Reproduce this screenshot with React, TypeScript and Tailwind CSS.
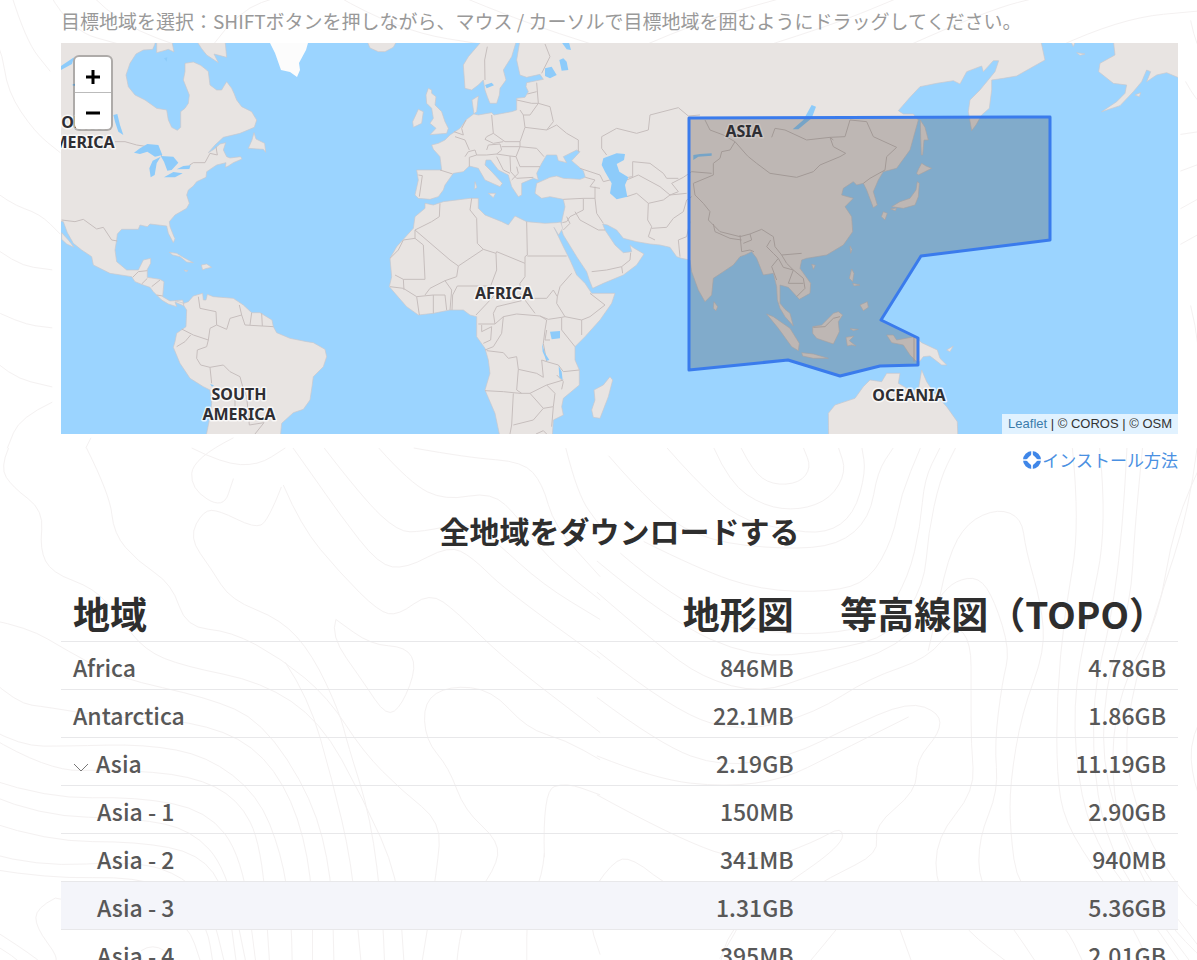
import React, { useState } from "react";

type Region = {
  name: string;
  terrain: string;
  topo: string;
  children?: Region[];
};

const REGIONS: Region[] = [
  { name: "Africa", terrain: "846MB", topo: "4.78GB" },
  { name: "Antarctica", terrain: "22.1MB", topo: "1.86GB" },
  {
    name: "Asia",
    terrain: "2.19GB",
    topo: "11.19GB",
    children: [
      { name: "Asia - 1", terrain: "150MB", topo: "2.90GB" },
      { name: "Asia - 2", terrain: "341MB", topo: "940MB" },
      { name: "Asia - 3", terrain: "1.31GB", topo: "5.36GB" },
      { name: "Asia - 4", terrain: "395MB", topo: "2.01GB" },
    ],
  },
];

// Each layer is drawn on its own grid, three units to a map pixel
type Layer = {
  transform: string;
  land: string[];
  borders: string[];
  lakes: string[];
};

const LAYERS: Layer[] = [
  {
    // North and South America
    transform: "translate(60 40) scale(0.33333)",
    land: [
      "-20,-20 285,-20 285,12 278,28 250,30 228,42 210,70 198,105 205,140 225,165 255,180 290,205 320,210 325,240 335,262 352,271 362,262 362,215 375,205 385,190 388,165 370,120 375,95 375,70 400,66 422,76 440,90 445,95 450,135 470,150 485,150 492,138 500,125 515,145 522,160 530,180 545,200 575,215 590,240 583,262 540,280 490,292 465,315 445,338 462,328 480,312 497,308 490,330 500,350 510,354 542,350 546,357 520,368 505,378 496,382 498,368 470,375 440,395 438,412 410,425 400,438 385,450 380,465 388,490 380,505 345,525 328,545 330,560 342,590 345,596 340,608 325,580 320,558 270,552 262,560 240,555 235,568 185,568 172,582 170,600 165,630 170,665 200,690 235,690 250,660 272,655 272,670 262,688 262,712 300,718 312,725 308,770 330,783 345,782 368,784 372,798 345,786 350,800 325,792 305,780 280,755 270,742 250,735 225,725 215,710 150,700 100,675 95,650 65,630 40,610 22,578 10,545 -20,540",
      "5,578 25,600 42,622 20,612 5,598",
      "290,0 290,38 312,32 325,28 342,36 335,0",
      "408,0 425,26 440,45 475,68 462,42 500,52 495,0",
      "582,278 576,300 565,325 610,328 617,337 614,310 588,297",
      "328,637 350,640 375,655 400,668 380,666 360,650 338,645",
      "424,675 440,672 455,682 436,686 428,690",
      "372,690 384,692 378,695",
      "345,782 368,780 372,798 380,810 378,860 350,880 345,905 340,922 360,970 390,1015 430,1040 450,1050 455,1090 450,1130 436,1200 660,1200 665,1150 700,1118 730,1108 750,1080 756,1040 760,1010 790,980 800,950 795,928 760,908 740,905 690,895 650,878 640,860 636,840 600,818 575,818 550,795 520,775 460,770 442,763 438,780 430,780 428,760 400,768 385,785 372,790",
    ],
    borders: [
      "165,305 195,305 230,315 262,320 290,322 305,348",
      "388,376 400,368 435,368 450,340 472,345 468,320",
      "5,540 45,545 70,538 110,567 130,562 155,600 172,603",
      "415,770 420,805 468,815 470,855 500,868 510,835 545,825 555,855 640,860",
      "545,825 538,795",
      "575,818 570,855",
      "605,820 607,858",
      "470,855 450,865 445,900 400,885 365,867",
      "445,900 440,920 412,930 410,955 422,975 450,982 490,975 510,995 540,1010 548,1040 560,1070 568,1155 612,1148 585,1182",
      "450,982 455,1030",
      "350,920 375,905 392,885",
      "218,712 235,695 262,692",
      "245,732 262,715",
      "275,740 300,720",
      "290,765 308,768",
      "525,1080 525,1100",
    ],
    lakes: [
      "160,225 172,222 180,255 190,285 175,275 165,245",
      "222,338 240,325 262,312 295,315 307,345 285,350 262,335 240,342",
      "302,350 278,362 268,385 272,412 284,405 290,370",
      "302,348 340,350 355,368 335,390 322,392 312,365",
      "312,412 340,396 368,400 345,412",
      "350,388 370,378 392,376 388,387",
      "0,80 42,52 36,72 0,92",
      "35,135 48,130 46,138",
      "312,55 322,52 320,65",
      "450,1032 462,1036 456,1040",
    ],
  },
  {
    // Europe, Asia and Oceania
    transform: "translate(350 40) scale(0.33333)",
    land: [
      "50,0 60,24 85,35 105,35 130,22 142,0",
      "398,0 355,50 340,75 345,145 365,150 385,135 400,120 405,150 412,170 420,190 440,190 448,165 450,145 468,120 460,90 485,50 500,0",
      "510,0 500,60 510,105 530,112 570,103 580,118 530,128 528,140 535,155 525,172 500,175 500,210 485,215 432,225 425,218 385,225 372,222 366,180 385,168 380,215 350,238 330,265 300,285 285,300 265,310 245,315 250,328 270,350 275,390 200,390 205,420 195,465 205,475 240,478 265,470 280,450 285,435 310,400 340,395 358,378 385,385 405,420 450,440 457,430 425,395 405,375 408,360 422,360 445,390 475,405 485,440 505,470 515,465 515,430 550,415 565,420 560,400 575,370 590,345 620,345 625,362 650,368 640,350 680,330 690,335 665,362 700,392 706,412 690,418 640,415 620,408 600,412 560,430 555,460 575,475 600,470 640,478 645,500 635,545 632,560 640,585 680,650 710,695 718,720 728,745 760,730 820,705 860,675 882,642 850,623 840,615 845,635 820,638 795,615 765,570 758,552 772,555 800,570 820,595 860,605 900,612 930,615 960,622 980,650 995,655 1020,660 1025,695 1045,750 1065,785 1085,765 1090,715 1120,695 1150,675 1170,650 1185,645 1205,635 1220,655 1232,685 1240,705 1270,700 1280,740 1282,780 1290,805 1305,830 1330,858 1320,820 1305,808 1290,790 1290,735 1315,742 1348,778 1380,760 1382,730 1350,685 1355,660 1370,655 1430,645 1480,615 1508,575 1505,530 1485,500 1510,475 1475,465 1480,445 1510,425 1520,435 1540,430 1550,450 1565,490 1570,503 1582,495 1570,455 1585,420 1600,395 1640,385 1680,330 1705,240 1690,222 1660,222 1645,212 1680,172 1710,140 1760,130 1810,122 1830,132 1850,95 1895,78 1900,95 1930,62 1946,62 1935,95 1890,150 1860,180 1855,215 1865,272 1878,255 1895,225 1918,205 1925,150 1925,120 1960,115 2000,108 2085,60 2072,0",
      "235,145 245,150 245,160 258,170 255,195 275,215 285,245 295,265 290,280 240,284 258,265 240,250 250,235 245,205 230,190 228,165",
      "205,208 220,215 215,250 190,262 188,245",
      "375,425 381,442 374,448",
      "415,460 437,460 430,473",
      "2290,0 2295,45 2250,70 2246,95 2290,130 2330,135 2325,160 2300,185 2255,215 2310,197 2350,155 2375,125 2390,90 2402,95 2390,125 2420,105 2450,98 2490,115 2490,0",
      "2355,165 2372,158 2368,170",
      "2180,38 2205,42 2190,46",
      "2160,0 2170,20 2178,0",
      "1711,240 1725,262 1735,300 1722,300 1718,345 1714,345 1712,290",
      "1715,370 1728,378 1745,385 1725,395 1705,405 1700,400 1706,386",
      "1702,425 1708,430 1705,470 1695,495 1660,505 1625,500 1650,485 1680,475 1698,450",
      "1600,515 1612,520 1605,540 1594,530",
      "1622,507 1640,504 1636,512",
      "1500,618 1506,628 1502,640",
      "1385,673 1396,676 1390,688",
      "1505,687 1512,700 1508,725 1498,715",
      "1508,730 1530,735 1512,738",
      "1530,795 1552,785 1555,802 1540,812",
      "1092,785 1103,800 1098,812 1090,805",
      "1250,822 1270,830 1320,865 1348,910 1345,932 1325,920 1285,865",
      "1355,938 1390,942 1435,955 1390,955 1358,948",
      "1388,860 1415,855 1450,820 1465,815 1478,825 1465,845 1468,875 1450,912 1400,895 1388,880",
      "1488,892 1512,888 1498,902 1518,918 1505,915 1492,918",
      "1500,866 1525,868 1510,872",
      "1610,885 1630,885 1640,900 1695,890 1715,908 1762,930 1770,955 1790,975 1775,975 1740,948 1720,950 1705,970 1680,945 1660,915 1625,908",
      "1790,930 1810,918 1800,935",
      "1436,1200 1435,1120 1455,1095 1515,1075 1540,1040 1560,1020 1595,1025 1610,1000 1650,1000 1645,1030 1680,1050 1705,1050 1715,990 1730,1025 1750,1055 1790,1100 1822,1145 1824,1200",
    ],
    borders: [
      "412,20 404,60 405,120",
      "585,12 600,50 575,100",
      "560,128 565,190 600,200 610,245 590,270 525,262 520,225",
      "532,162 560,155",
      "500,180 545,190 565,190 540,225 520,225 510,210",
      "425,225 430,280 410,290 405,298 430,310 460,305",
      "430,280 465,305 510,305 525,262",
      "590,270 620,255 650,280 685,300 685,335",
      "455,320 510,320 560,325 582,350",
      "510,305 510,320 498,350 510,380 570,380",
      "410,330 415,315 450,312 455,330 440,342",
      "345,350 355,335 375,330 380,345 358,352 358,380",
      "380,345 410,345 440,342 480,348 498,350",
      "315,290 345,300 358,330",
      "312,275 340,285 335,265 348,240",
      "270,390 308,402",
      "205,405 217,407 208,470",
      "440,350 460,390 480,400",
      "480,348 482,395 500,415 550,412",
      "500,380 505,400 485,420",
      "690,385 750,405 760,425 780,420",
      "706,412 735,420 720,440 750,445",
      "770,345 755,325 755,290 800,265 860,280 895,270 900,225 985,203 1015,228 1050,225",
      "835,412 848,410 848,365 900,370 940,400 950,415 985,415",
      "830,420 865,405 930,440 960,465 985,455 965,430 1000,412 1025,395 1085,400",
      "830,470 860,460 895,490 940,480 960,465 1010,460",
      "895,490 893,540 905,560 895,590 915,600",
      "905,565 950,562 970,535 1000,515 1010,480 1025,470",
      "990,650 985,600 1010,590 1020,545",
      "640,478 700,475 735,475 735,440",
      "735,475 740,520 760,550",
      "700,475 700,510 660,530 650,545 637,548",
      "675,515 690,540 745,570 765,570",
      "640,570 660,550 650,530",
      "725,695 770,690 815,680 840,660 842,638",
      "815,680 818,700",
      "1065,240 1080,270 1120,285 1155,305",
      "1155,305 1190,345 1195,350 1220,370 1260,400 1340,412 1390,395 1410,375 1470,350 1487,340 1450,320 1440,292 1370,300 1305,270 1275,265 1265,292",
      "1450,300 1440,292 1485,290 1500,240",
      "1500,240 1550,245 1570,290 1640,322 1610,350 1605,390 1560,415 1540,430",
      "1155,305 1140,330 1115,335 1110,355 1090,370 1090,405 1030,430 1035,465 1060,490 1080,515 1075,540 1110,575 1170,590 1200,582 1235,568 1270,590 1275,620 1295,645 1355,640",
      "1090,552 1095,575 1140,595 1175,600",
      "1170,585 1175,635 1200,630 1212,635",
      "1200,582 1205,600 1180,610",
      "1262,600 1250,620 1270,640 1285,655 1265,680 1280,720",
      "1295,645 1310,670 1330,690 1360,715 1365,745 1340,770",
      "1285,655 1300,682 1330,690 1315,730 1360,730",
      "1390,862 1425,860 1450,835 1470,830",
      "1692,890 1692,965",
    ],
    lakes: [
      "760,355 800,340 825,342 822,360 800,372 808,395 835,412 825,435 832,470 800,478 780,460 785,430 765,395 755,375",
      "585,85 605,80 620,105 600,115 585,108",
      "628,60 640,55 650,65 655,90 635,92",
      "630,0 650,28 663,30 655,0",
      "405,135 425,128 432,136 410,145",
      "1030,345 1050,342 1085,340 1085,347 1045,350 1030,360",
      "1385,195 1398,200 1385,235 1345,268 1328,268 1360,240",
    ],
  },
  {
    // Africa
    transform: "translate(370 180) scale(0.33333)",
    land: [
      "165,70 190,75 220,65 300,55 325,55 325,85 345,105 395,125 415,135 435,108 470,125 525,130 560,128 572,126 578,145 566,165 552,142 580,200 600,240 620,285 645,310 665,340 735,340 725,370 690,420 645,470 615,500 615,540 628,570 628,615 580,655 575,680 580,705 550,720 545,800 396,800 375,700 345,630 360,580 355,540 345,505 320,470 320,410 300,405 280,390 240,390 190,400 145,405 110,380 75,340 58,320 65,290 60,235 80,200 130,145 135,110 165,85",
      "720,590 728,600 715,650 690,715 670,712 665,690 675,660 672,630 700,615",
    ],
    borders: [
      "210,70 208,110 185,125 135,150 135,175 100,180 85,210 60,235",
      "305,55 300,90 320,115 322,190 340,208 265,258 240,240 135,150",
      "340,208 378,220 380,215 465,250 465,230 472,225 470,125",
      "472,228 590,228",
      "378,220 380,270 362,318 262,318",
      "465,250 465,290 450,310 450,330",
      "450,340 495,400",
      "485,355 530,355 550,330 562,350 560,370 585,410 635,420 660,410 705,375 660,340",
      "605,280 570,320 562,350",
      "265,258 260,290 225,302 180,325 165,345",
      "135,175 160,195 165,298 100,298 75,285",
      "60,320 100,325 140,350 148,405",
      "100,298 102,330",
      "140,350 190,345 190,400",
      "190,345 225,345 230,390",
      "225,302 245,330 240,390",
      "262,318 248,345 246,390",
      "318,405 370,350 362,318",
      "325,432 375,432 370,400 380,380 455,362",
      "375,432 400,410 440,402 510,408 530,420 525,450 520,490 530,545",
      "335,435 335,455 365,440 362,480 340,490",
      "400,410 395,460 370,500 345,510",
      "350,512 400,518 415,535 440,530 445,568 500,580 520,592 515,540 530,545",
      "510,408 535,418 575,412 575,450 615,500",
      "575,412 585,410",
      "635,420 635,465",
      "530,450 525,480 540,480",
      "530,545 565,555 580,575 628,570",
      "345,632 400,635 450,640 480,640 530,615 580,600",
      "445,568 440,630 455,640",
      "430,640 425,735 420,762",
      "480,640 520,685 490,720 430,735",
      "530,615 555,640 550,680 520,685",
      "550,680 545,740",
      "498,762 520,752 530,762",
      "560,585 580,605 575,628",
    ],
    lakes: [
      "540,455 570,453 570,475 545,478",
      "516,490 525,520 538,540 530,542 518,515",
      "566,558 575,575 578,600 568,592",
    ],
  },
];

const CONTOUR_GROUPS = [
  {
    transform: "translate(0 440) scale(0.3827)",
    lines: [
      "50,0 28,50 60,100 140,160 130,260 160,320 270,360 330,430 400,520 500,560 700,600 850,700 960,900 1050,1100 1065,1325",
      "250,0 310,120 320,220 380,290 470,350 505,460 620,470 750,540 870,640 960,780 1060,880 1160,960 1150,1080 1110,1325",
      "1200,1325 1210,1200 1300,1080 1310,1010 1220,930 1180,820 1120,750 1115,650 1180,610 1290,620 1380,720 1480,750 1568,800",
      "750,100 715,190 680,205 590,160 550,160 513,230 570,310 620,390 750,440 830,530 900,680 920,760 980,950 1010,1200 1015,1325",
      "755,95 800,200 900,320 1000,420 1050,430 1130,370 1200,420 1320,540 1568,730",
      "0,440 100,460 200,520 330,590 560,640 700,700 830,900 880,1100 885,1325",
      "0,590 70,655 150,665 300,690 520,700 680,760 780,900 830,1100 830,1325",
      "0,720 80,765 200,765 400,760 560,790 690,890 750,1040 775,1200 778,1325",
      "0,740 150,830 320,825 520,840 640,900 700,1020 720,1325",
      "0,850 150,900 380,895 560,930 650,1050 685,1325",
      "0,890 130,945 380,950 520,980 610,1080 660,1325",
      "0,960 150,1010 380,1010 540,1040 610,1140 635,1325",
      "0,1040 120,1075 380,1060 500,1100 570,1180 605,1325",
      "0,1080 150,1105 380,1100 500,1150 560,1230 575,1325",
      "0,1230 80,1280 160,1340 250,1460 360,1490 560,1490 640,1470",
      "0,1265 60,1300 160,1390 240,1490 330,1560",
      "0,1360 130,1430 220,1560",
      "0,1440 80,1500 120,1560",
      "170,1155 120,1180 120,1230 180,1310 160,1325",
      "170,1155 240,1170 400,1175 510,1220 545,1325",
      "390,1290 420,1270 480,1310 400,1325 385,1300",
      "520,0 600,40 690,45 760,0",
      "780,0 830,70 900,170 1000,300 1070,310 1180,250 1240,280 1320,360 1568,540",
      "860,0 960,130 1050,215 1110,215 1230,190 1300,240 1420,350 1568,440",
      "1000,0 1080,90 1170,135 1290,112 1360,180 1430,280 1568,390",
      "1090,0 1230,25 1370,35 1420,90 1450,200 1568,330",
      "1480,0 1510,120 1568,200",
      "890,440 875,480 960,600 1020,690 1060,660 1098,560 1070,510 980,505 890,440",
      "760,550 820,640 880,850 930,1060 955,1325",
      "1425,1050 1420,880 1480,858 1568,890",
      "1425,1040 1420,1100 1380,1180 1380,1325",
      "1568,1110 1535,1200 1568,1300",
      "720,1470 730,1560",
      "790,1470 770,1560",
      "860,1470 850,1560",
      "930,1470 900,1560",
      "1060,1470 1040,1560",
      "1180,1470 1160,1560",
      "1360,1470 1320,1560",
    ],
  },
  {
    transform: "translate(597 440) scale(0.3827)",
    lines: [
      "370,0 400,60 450,95 520,90 550,50 530,0",
      "300,0 340,90 430,150 520,160 600,130 640,60 620,0",
      "180,0 250,80 360,180 480,210 590,220 660,170 690,60 680,0",
      "30,20 160,170 290,240 480,260 620,250 700,180 720,60 760,0",
      "120,240 260,310 420,365 600,370 700,340 760,230 780,120 830,0",
      "60,270 200,390 400,470 580,480 730,450 800,330 830,200 840,80 880,0",
      "0,290 180,440 400,540 600,520 760,480 840,350 850,220 880,80 920,0",
      "0,370 150,500 270,590 420,630 560,580 780,510 880,380 920,340 980,330 1020,390 1060,520 1040,600 1020,760 1030,880 980,1000 980,1120 1060,1220 1130,1325",
      "0,520 200,680 380,730 560,680 700,590 850,540 920,450 960,500 960,620 960,760 970,880 870,1000 870,1130 950,1240 1060,1325",
      "0,640 160,760 320,820 500,790 640,720 800,650 880,680 880,730 820,800 820,880 710,970 725,1040 600,1100 470,1180",
      "0,790 150,850 330,870 480,850 600,790 800,690",
      "0,890 200,1000 400,1070 560,1010 630,970 630,1020 440,1150 340,1240 315,1325",
      "0,1120 40,1060 90,1050 200,1140 380,1160 380,1200 315,1310",
      "540,1325 620,1230 680,1150 750,1160 810,1325",
      "1570,1325 1500,1260 1440,1180 1380,1060 1330,940 1320,740 1360,580 1440,440 1480,200 1568,0",
      "1220,0 1240,200 1200,420 1180,640 1180,840 1200,960 1290,1100 1360,1200 1420,1325",
      "1290,0 1310,200 1260,440 1220,660 1240,900 1300,1050 1400,1180 1500,1325",
      "1360,0 1350,200 1320,440 1270,640 1280,900 1340,1080 1450,1220 1568,1380",
      "1400,0 1380,200 1370,400 1300,620 1300,860 1400,1090 1568,1310",
      "1540,0 1520,160 1440,400 1380,600 1350,780 1400,980 1500,1140 1568,1200",
      "850,520 860,480 900,280 950,190 1030,155 1090,180 1100,260 1140,400 1150,520 1090,680 1060,860 1060,980 1080,1130 1200,1220 1250,1325",
      "1568,660 1520,740 1530,860 1568,940",
      "315,1475 360,1500 480,1510",
      "610,1475 600,1520 620,1560",
      "100,1560 130,1525 150,1560",
      "1040,1475 1060,1560",
      "1120,1475 1180,1560",
      "1400,1475 1460,1560",
      "1530,1470 1568,1520",
    ],
  },
  {
    // margins above and beside the map
    transform: "translate(0 0)",
    lines: [
      "-5,15 12,45 18,90 45,130 70,150",
      "22,-5 36,40 60,70",
      "60,-5 80,30 130,44",
      "100,-5 130,25 200,50",
      "220,44 245,10 290,-5",
      "340,-5 400,30 500,46",
      "460,-5 520,20 600,46",
      "640,46 700,20 790,-5",
      "760,46 830,24 900,-5",
      "900,46 980,10 1040,-5",
      "1050,46 1110,18 1197,10",
      "1180,20 1186,48 1200,60",
      "1175,80 1186,100 1200,108",
      "1170,132 1197,128",
      "1170,168 1197,158",
      "1170,205 1197,190",
      "1170,240 1197,225",
      "1180,300 1190,340 1185,400 1197,440",
      "-5,180 20,200 50,210 70,230",
      "-5,235 25,260 62,265",
      "-5,300 30,318 62,322",
      "-5,345 20,370 62,380",
      "62,395 30,410 18,440",
      "100,430 95,440",
      "240,430 200,450 198,480 230,500 240,470",
    ],
  },
];

// Rounds the corners of a list of points by running curves between midpoints
function smooth(line: string) {
  const pts = line.split(" ").map((p) => p.split(",").map(Number));
  let d = `M${pts[0][0]} ${pts[0][1]}`;
  for (let i = 1; i < pts.length - 1; i++) {
    const mx = (pts[i][0] + pts[i + 1][0]) / 2;
    const my = (pts[i][1] + pts[i + 1][1]) / 2;
    d += `Q${pts[i][0]} ${pts[i][1]} ${mx} ${my}`;
  }
  const last = pts[pts.length - 1];
  return d + `L${last[0]} ${last[1]}`;
}

const LABELS = [
  { text: "NORTH", x: 77, y: 128 },
  { text: "AMERICA", x: 78, y: 148 },
  { text: "SOUTH", x: 239, y: 400 },
  { text: "AMERICA", x: 239, y: 420 },
  { text: "AFRICA", x: 504, y: 299 },
  { text: "ASIA", x: 744, y: 137 },
  { text: "OCEANIA", x: 909, y: 401 },
];

function ContourBackground() {
  return (
    <svg
      className="absolute inset-0 -z-10 h-full w-full"
      viewBox="0 0 1197 960"
      preserveAspectRatio="xMidYMin slice"
      fill="none"
      stroke="#f4f1f1"
      aria-hidden="true"
    >
      {CONTOUR_GROUPS.map((group) => (
        <g key={group.transform} transform={group.transform}>
          {group.lines.map((line) => (
            <path key={line} d={smooth(line)} strokeWidth="1" vectorEffect="non-scaling-stroke" />
          ))}
        </g>
      ))}
    </svg>
  );
}

function WorldMap() {
  return (
    <svg
      className="absolute inset-0 h-full w-full"
      viewBox="61 43 1117 391"
      preserveAspectRatio="xMidYMid slice"
      role="img"
      aria-label="World map"
    >
      {LAYERS.map((layer) => (
        <g key={layer.transform} transform={layer.transform} strokeLinejoin="round">
          {layer.land.map((points) => (
            <polygon key={points} points={points} fill="#e8e4e2" stroke="#c9c7cc" strokeWidth="2" />
          ))}
          {layer.borders.map((points) => (
            <polyline key={points} points={points} fill="none" stroke="#c6bebd" strokeWidth="3" />
          ))}
          {layer.lakes.map((points) => (
            <polygon key={points} points={points} fill="#8dcbfa" />
          ))}
        </g>
      ))}
      {/* Greenland */}
      <path d="M270 43L275 53L281 70L290 72L297 77L300 70L299 63L306 50L308 43Z" fill="#fcfcfc" />

      <polygon
        points="689,118 1050,117 1050,240 921,256 881,320 918,338 918,365 880,366 840,376 788,360 689,370"
        fill="#21120a"
        fillOpacity="0.21"
        stroke="#3a7bec"
        strokeWidth="3"
        strokeLinejoin="round"
      />
      {LABELS.map((label) => (
        <text
          key={label.text + label.x}
          x={label.x}
          y={label.y}
          textAnchor="middle"
          className="font-['Noto_Sans',sans-serif] text-[16px] font-bold"
          fill="#2e2e33"
          stroke="#ffffff"
          strokeOpacity={label.text === "ASIA" ? 0.2 : 0.75}
          strokeWidth="3"
          strokeLinejoin="round"
          paintOrder="stroke"
        >
          {label.text}
        </text>
      ))}
    </svg>
  );
}

function SizeCell({ children }: { children: React.ReactNode }) {
  return <td className="px-3 pt-1 text-right">{children}</td>;
}

export default function App() {
  const [expanded, setExpanded] = useState(true);
  const [active, setActive] = useState("Asia - 3");

  return (
    <div className="relative isolate min-h-screen overflow-hidden bg-white pl-[61px] pr-[19px] font-['Noto_Sans_CJK_JP',sans-serif]">
      <ContourBackground />

      <p className="h-[43px] pt-1 text-[19px] leading-[34px] whitespace-nowrap text-[#999]">
        目標地域を選択：SHIFTボタンを押しながら、マウス / カーソルで目標地域を囲むようにドラッグしてください。
      </p>

      <div className="relative h-[391px] overflow-hidden bg-[#9bd4ff]">
        <WorldMap />
        <div className="absolute top-3 left-3 flex w-10 flex-col overflow-hidden rounded-md border-2 border-black/25 bg-white bg-clip-padding">
          <button
            type="button"
            aria-label="Zoom in"
            className="flex h-9 items-center justify-center border-b border-[#bbb] pt-1"
          >
            <svg className="h-4 w-4" viewBox="0 0 16 16" stroke="black" strokeWidth="3">
              <path d="M8 1V15M1 8H15" />
            </svg>
          </button>
          <button type="button" aria-label="Zoom out" className="flex h-9 items-center justify-center pt-1">
            <svg className="h-4 w-4" viewBox="0 0 16 16" stroke="black" strokeWidth="3">
              <path d="M1 8H15" />
            </svg>
          </button>
        </div>
        <div className="absolute right-0 bottom-0 bg-white/70 px-1.5 font-['Liberation_Sans',sans-serif] text-[13px] leading-5 text-[#333]">
          <a href="#leaflet" className="text-[#3b7cab]">Leaflet</a> | © COROS | © OSM
        </div>
      </div>

      <div className="flex h-[52px] items-center justify-end">
        <a href="#install" className="flex items-center text-[17px] text-[#4a90e2]">
          <svg className="h-5 w-5" viewBox="0 0 20 20" fill="none">
            <circle cx="10" cy="10" r="6.5" stroke="#3f86e8" strokeWidth="5" />
            <path d="M10 0V20M0 10H20" stroke="white" strokeWidth="1.6" />
            <path d="M10 4L16 10L10 16L4 10Z" fill="white" />
          </svg>
          インストール方法
        </a>
      </div>

      <h2 className="pt-6 text-center text-[30px] leading-10 font-bold text-[#2e2e2e]">
        全地域をダウンロードする
      </h2>

      <table className="mt-9 w-full table-fixed border-collapse">
        <thead>
          <tr className="h-[55px] border-b border-[#e8e8ea] text-[37px] leading-[50px] text-[#2e2e2e]">
            <th scope="col" className="px-3 text-left font-bold">地域</th>
            <th scope="col" className="px-3 text-right font-bold">地形図</th>
            <th scope="col" className="px-3 text-right font-bold whitespace-nowrap">等高線図（TOPO）</th>
          </tr>
        </thead>
        <tbody className="text-[23px] leading-8 font-medium text-[#585858]">
          {REGIONS.map((region) => (
            <React.Fragment key={region.name}>
              <tr className="h-12 border-b border-[#e8e8ea]">
                <td className="px-3 pt-1">
                  {region.children ? (
                    <button
                      type="button"
                      aria-expanded={expanded}
                      onClick={() => setExpanded(!expanded)}
                      className="flex items-center gap-[7px]"
                    >
                      <svg className="mt-2 h-4 w-4" viewBox="0 0 16 16" fill="none" stroke="#777">
                        <path d="M1 5L8 12L15 5" />
                      </svg>
                      {region.name}
                    </button>
                  ) : (
                    region.name
                  )}
                </td>
                <SizeCell>{region.terrain}</SizeCell>
                <SizeCell>{region.topo}</SizeCell>
              </tr>
              {expanded &&
                region.children?.map((child) => (
                  <tr
                    key={child.name}
                    onMouseEnter={() => setActive(child.name)}
                    className={
                      child.name === active
                        ? "h-12 border-b border-[#e8e8ea] bg-[#f4f5fa]"
                        : "h-12 border-b border-[#e8e8ea]"
                    }
                  >
                    <td className="pt-1 pr-3 pl-9">{child.name}</td>
                    <SizeCell>{child.terrain}</SizeCell>
                    <SizeCell>{child.topo}</SizeCell>
                  </tr>
                ))}
            </React.Fragment>
          ))}
        </tbody>
      </table>
    </div>
  );
}
